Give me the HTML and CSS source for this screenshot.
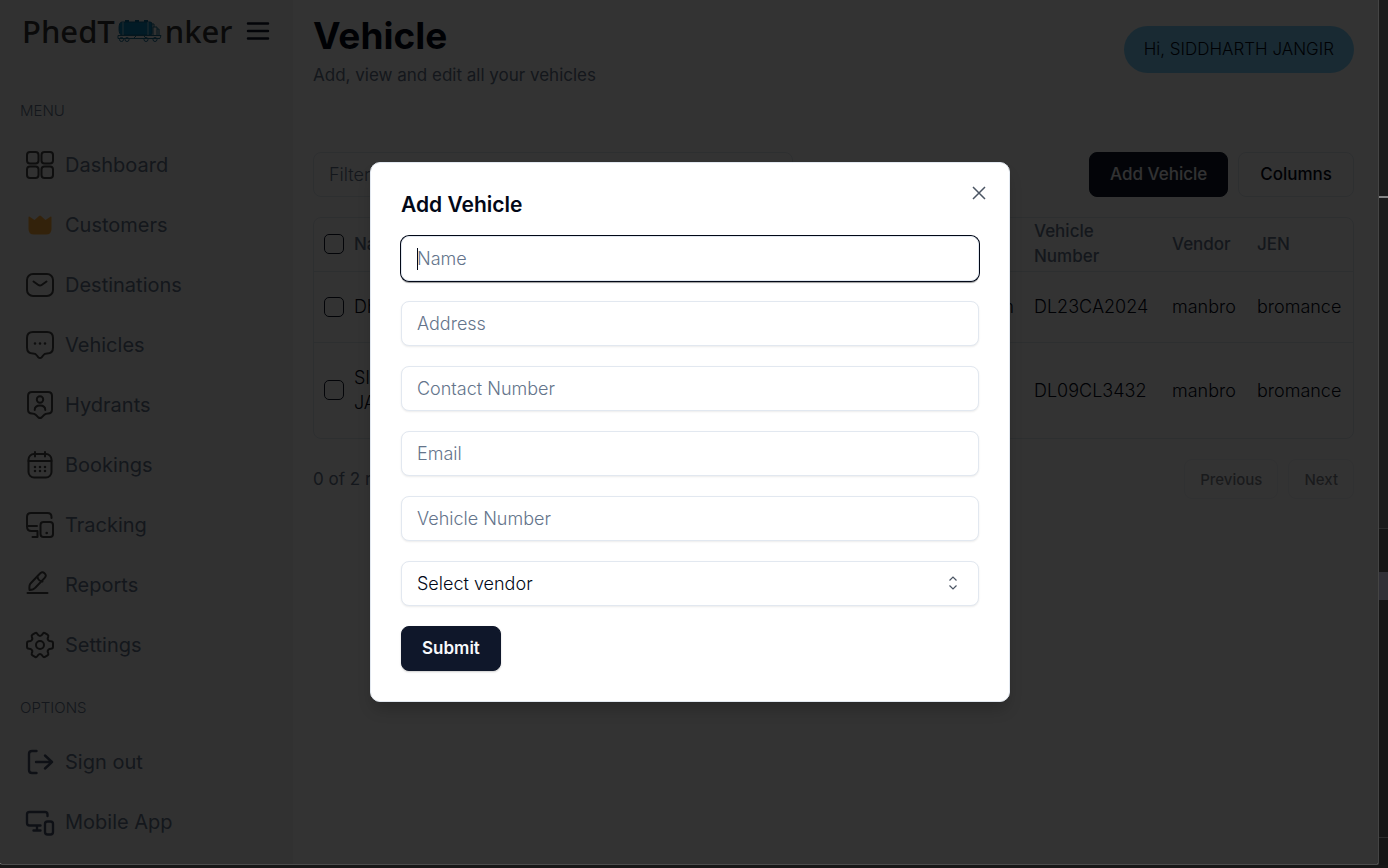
FILE: index.html
```html
<!DOCTYPE html>
<html lang="en">
<head>
<meta charset="utf-8">
<meta name="viewport" content="width=device-width, initial-scale=1">
<title>Vehicle</title>
<link rel="stylesheet" href="styles.css">
</head>
<body>
<div class="desktop">
  <div class="window">
    <div class="app">
      <aside class="sidebar">
        <div class="brand">
          <a class="logo" href="#" aria-label="PhedTanker">
            <span>PhedT</span>
            <svg class="tanker" viewBox="0 0 46 24" fill="none" stroke="#1d6f93" stroke-width="1">
              <path d="M5 3h28q2 0 2 2v9q0 2-2 2H5q-3 0-3-6.500T5 3z" fill="#0d86bd" stroke="#0b6c98"/>
              <path d="M6 3v13M31 3v13" stroke="#a9d5e6"/>
              <path d="M8 2h4M18 2h4M27 2h4" stroke="#0b6c98" stroke-width="2"/>
              <path d="M36 16V8h4v8M40 10h2v6M34 5h3v3M1 16.500h43l-1 3H1zM16 20l3-3M30 20l-3-3"/>
              <circle cx="4.500" cy="20.500" r="2"/><circle cx="10" cy="20.500" r="2"/>
              <circle cx="29" cy="20.500" r="2"/><circle cx="38" cy="20.500" r="2"/>
            </svg>
            <span>nker</span>
          </a>
          <button class="burger" aria-label="Toggle menu">
            <svg viewBox="0 0 30 30" fill="none" stroke="currentColor" stroke-width="2.500" stroke-linecap="round"><path d="M5 7.500h20M5 15h20M5 22.500h20"/></svg>
          </button>
        </div>
        <nav>
          <h2 class="group">MENU</h2>
          <ul class="menu">
            <li><a href="#"><svg class="ico" viewBox="0 0 30 30"><rect x="2" y="2" width="11.500" height="11.500" rx="3"/><rect x="16.500" y="2" width="11.500" height="11.500" rx="3"/><rect x="2" y="16.500" width="11.500" height="11.500" rx="3"/><rect x="16.500" y="16.500" width="11.500" height="11.500" rx="3"/></svg>Dashboard</a></li>
            <li><a href="#"><svg class="ico crown" viewBox="0 0 30 30"><path d="M3.500 7.500q0-1.500 1.200-.700L9.500 10l4.500-4q1-1 2 0l4.500 4 4.800-3.200q1.200-.800 1.200.700V19q0 5.500-5.500 5.500H9q-5.500 0-5.500-5.500z"/></svg>Customers</a></li>
            <li><a href="#"><svg class="ico" viewBox="0 0 30 30"><rect x="2" y="4" width="26" height="22" rx="6"/><path d="M8.500 11.500l4.500 3.300q2 1.400 4 0l4.500-3.300"/></svg>Destinations</a></li>
            <li><a href="#"><svg class="ico" viewBox="0 0 30 30"><path d="M8 2h14q6 0 6 6v9.500q0 6-6 6-2.500 0-3.500 1.500l-1.700 2.200q-1.800 1.600-3.600 0L11.500 25Q10.500 23.500 8 23.500q-6 0-6-6V8q0-6 6-6z"/><path class="dots" d="M10 13.500h.01M15 13.500h.01M20 13.500h.01"/></svg>Vehicles</a></li>
            <li><a href="#"><svg class="ico" viewBox="0 0 30 30"><path d="M7 2h16q4 0 4 4v13.500q0 4-4 4-2.500 0-3.700 1.300l-2.600 2.600q-1.700 1.300-3.400 0l-2.600-2.600Q9.500 23.500 7 23.500q-4 0-4-4V6q0-4 4-4z"/><circle cx="15" cy="9.500" r="3.200"/><path d="M9.700 20q0-4.500 5.300-4.500t5.300 4.500"/></svg>Hydrants</a></li>
            <li><a href="#"><svg class="ico" viewBox="0 0 30 30"><rect x="3.500" y="4" width="23" height="23.500" rx="5.500"/><path d="M3.500 11h23M10 2v4.500M20 2v4.500"/><path class="dots" d="M10 17h.01M15 17h.01M20 17h.01M10 21h.01M15 21h.01M20 21h.01"/></svg>Bookings</a></li>
            <li><a href="#"><svg class="ico" viewBox="0 0 30 30"><path d="M26.500 8V7q0-4-4-4H6Q2 3 2 7v9.500q0 4.500 4.500 4.500h6V27H7.500M2 16h10"/><rect x="15.500" y="12" width="12.500" height="15" rx="3"/><path class="dots" d="M21.700 23h.01"/></svg>Tracking</a></li>
            <li><a href="#"><svg class="ico" viewBox="0 0 30 30"><path d="M2.500 23h20M4.500 20q-.5-5 1-6.500L14.500 4q2.500-3 5-.800t.200 4.700L10.500 17.500Q8.500 20 4.500 20zM12.500 6.500q.5 4.500 5 5"/></svg>Reports</a></li>
            <li><a href="#"><svg class="ico" viewBox="0 0 30 30"><circle cx="15" cy="15" r="4"/><path d="M10 3.200q1.300-.8 2.200.500Q13.500 6 15 6t2.800-2.300q.9-1.300 2.200-.5l2.500 1.500q1.300.8.700 2.300-1.200 2 .2 3.300.9 1 2.600 1 2 0 2 1.900v3.600q0 1.900-2 1.900-1.700 0-2.600 1-1.400 1.300-.2 3.300.6 1.500-.7 2.300L20 26.800q-1.300.8-2.200-.5Q16.500 24 15 24t-2.800 2.300q-.9 1.300-2.200.5l-2.500-1.500q-1.300-.8-.7-2.300 1.200-2-.2-3.300-.9-1-2.600-1-2 0-2-1.900v-3.600q0-1.900 2-1.900 1.700 0 2.600-1 1.400-1.300.2-3.300-.6-1.500.7-2.300z"/></svg>Settings</a></li>
          </ul>
          <h2 class="group">OPTIONS</h2>
          <ul class="menu">
            <li><a href="#"><svg class="ico bold" viewBox="0 0 30 30"><path d="M11.500 4H7Q4 4 4 7v16q0 3 3 3h4.500M11 15h16M20 8.500l7 6.500-7 6.500"/></svg>Sign out</a></li>
            <li><a href="#"><svg class="ico bold" viewBox="0 0 30 30"><path d="M22.500 9V7.500q0-2.500-2.500-2.500H4.500Q2 5 2 7.500V16q0 2.500 2.500 2.500h11M8.500 23.500h7M12 18.500v5"/><rect x="20" y="14.500" width="8" height="13" rx="2.500"/></svg>Mobile App</a></li>
          </ul>
        </nav>
      </aside>

      <main class="main">
        <header class="page-head">
          <div>
            <h1>Vehicle</h1>
            <p>Add, view and edit all your vehicles</p>
          </div>
          <span class="pill">Hi, SIDDHARTH JANGIR</span>
        </header>
        <div class="toolbar">
          <input class="filter" type="text" placeholder="Filter names..." aria-label="Filter names">
          <button class="btn dark">Add Vehicle</button>
          <button class="btn light">Columns</button>
        </div>
        <div class="table-box">
          <table>
            <colgroup><col class="c-check"><col class="c-name"><col><col class="c-number"><col class="c-vendor"><col class="c-jen"></colgroup>
            <thead>
              <tr><th><input type="checkbox" aria-label="Select all"></th><th>Name</th><th>Email</th><th>Vehicle Number</th><th>Vendor</th><th>JEN</th></tr>
            </thead>
            <tbody>
              <tr><td><input type="checkbox" aria-label="Select row"></td><td>Dhruv</td><td class="email">dhruv@gmail.com</td><td>DL23CA2024</td><td>manbro</td><td>bromance</td></tr>
              <tr class="tall"><td><input type="checkbox" aria-label="Select row"></td><td>SIDDHARTH JANGIR</td><td></td><td>DL09CL3432</td><td>manbro</td><td>bromance</td></tr>
            </tbody>
          </table>
        </div>
        <footer class="pager">
          <p>0 of 2 row(s) selected.</p>
          <button class="btn small" disabled>Previous</button>
          <button class="btn small" disabled>Next</button>
        </footer>
      </main>
    </div>

    <div class="overlay">
      <form class="dialog" role="dialog" aria-modal="true" aria-labelledby="dialog-title">
        <h2 id="dialog-title">Add Vehicle</h2>
        <div class="field"><input class="focused" type="text" placeholder="Name" aria-label="Name"><span class="caret"></span></div>
        <div class="field"><input type="text" placeholder="Address" aria-label="Address"></div>
        <div class="field"><input type="text" placeholder="Contact Number" aria-label="Contact Number"></div>
        <div class="field"><input type="text" placeholder="Email" aria-label="Email"></div>
        <div class="field"><input type="text" placeholder="Vehicle Number" aria-label="Vehicle Number"></div>
        <div class="field">
          <select aria-label="Vendor"><option>Select vendor</option></select>
          <svg class="updown" viewBox="0 0 20 20" fill="none" stroke="currentColor" stroke-width="1.200"><path d="M6.500 7.500L10 4l3.500 3.500M6.500 12.500L10 16l3.500-3.500"/></svg>
        </div>
        <button class="btn dark submit" type="submit">Submit</button>
        <button class="close" type="button" aria-label="Close"><svg viewBox="0 0 20 20" fill="none" stroke="currentColor" stroke-width="1.500"><path d="M4 4l12 12M16 4L4 16"/></svg></button>
      </form>
    </div>
  </div>
  <div class="edge"><i class="edge-top"></i><i class="edge-mid"></i><i class="edge-gap"></i><i class="edge-thumb"></i><i class="edge-rest"></i><i class="edge-end"></i></div>
</div>
</body>
</html>
```
FILE: styles.css
```css
* { box-sizing: border-box; margin: 0; }

body {
  background: #171717;
  color: #020817;
  font-family: Inter, "Open Sans", sans-serif;
  font-size: 18px;
  font-weight: 300;
  line-height: 25px;
}

button, input, select { font: inherit; color: inherit; }
ul { list-style: none; padding: 0; }
svg { display: block; flex: none; }

.desktop { display: flex; height: 100vh; padding-bottom: 3px; }
.window {
  position: relative;
  flex: 1;
  overflow: hidden;
  border-right: 1px solid #444;
  border-bottom: 1px solid #4c4c4c;
  border-radius: 0 0 2px 2px;
}
.app { display: flex; min-height: 100%; background: #fff; }

/* sidebar */
.sidebar { flex: 0 0 293px; padding: 0 20px; background: #f5f5f5; }
.brand { display: flex; align-items: center; justify-content: space-between; height: 62px; margin-bottom: 16px; padding-left: 2px; }
.logo {
  display: flex;
  align-items: center;
  color: #333;
  font: 500 31px/42px "Noto Sans", sans-serif;
  text-decoration: none;
}
.tanker { width: 46px; height: 24px; margin: 0 2px; }
.burger { padding: 0; border: 0; background: none; color: #0f172a; }
.burger svg { width: 30px; height: 30px; }
.group { padding: 23px 0 14px; color: #64748b; font-size: 15px; font-weight: 300; line-height: 20px; }
.menu a { display: flex; align-items: center; gap: 10px; height: 60px; padding-left: 5px; color: #64748b; font-size: 20px; font-weight: 400; text-decoration: none; }
.ico { width: 30px; height: 30px; fill: none; stroke: #464646; stroke-width: 2; stroke-linecap: round; stroke-linejoin: round; }
.ico .dots { stroke-width: 2.6; }
.ico.bold { stroke: #46526a; stroke-width: 2.4; }
.ico.crown { fill: #ffab3a; stroke: none; }

/* page */
.main { flex: 1; min-width: 0; padding: 15px 24px 0 20px; }
.page-head { display: flex; justify-content: space-between; align-items: flex-start; margin-bottom: 64px; }
.page-head h1 { font-size: 37px; font-weight: 700; line-height: 42px; }
.page-head p { margin-top: 6px; color: #64748b; font-size: 17px; font-weight: 400; }
.pill { margin-top: 11px; padding: 11px 20px; border-radius: 24px; background: #7dd3fc; font-size: 17px; }
.toolbar { display: flex; gap: 10px; }
.filter { width: 480px; height: 45px; margin-right: auto; padding: 0 15px; border: 1px solid #e2e8f0; border-radius: 8px; background: none; }
::placeholder { color: #64748b; opacity: 1; }
.btn { height: 45px; padding: 0 20px; border: 1px solid #e2e8f0; border-radius: 8px; background: #fff; font-size: 17px; font-weight: 500; }
.btn.light { padding: 0 21px; }
.btn.dark { border-color: #0f172a; background: #0f172a; color: #f8fafc; }
.btn.small { height: 40px; padding: 0 15px; font-size: 15px; opacity: .5; color: #020817; }

.table-box { margin-top: 20px; border: 1px solid #e2e8f0; border-radius: 8px; }
table { width: 100%; table-layout: fixed; border-collapse: collapse; }
th, td { padding: 0 10px; text-align: left; vertical-align: middle; }
th { height: 53px; color: #64748b; font-size: 17px; font-weight: 500; }
td { height: 71px; border-top: 1px solid #e2e8f0; }
.tall td { height: 96px; }
.email { text-align: right; }
.c-check { width: 30px; }
.c-name { width: 130px; }
.c-number { width: 138px; }
.c-vendor { width: 85px; }
.c-jen { width: 106px; }
th:first-child, td:first-child { padding-right: 0; }
input[type="checkbox"] { display: block; appearance: none; width: 20px; height: 20px; border: 1px solid #0f172a; border-radius: 5px; }

.pager { display: flex; gap: 10px; align-items: center; padding-top: 20px; color: #64748b; }
.pager p { margin-right: auto; font-size: 17px; font-weight: 400; }

/* dialog */
.overlay { position: absolute; inset: 0; display: flex; align-items: center; justify-content: center; padding-left: 2px; background: rgba(0, 0, 0, .8); }
.dialog {
  position: relative;
  display: flex;
  flex-direction: column;
  gap: 20px;
  width: 640px;
  padding: 30px;
  border: 1px solid #e2e8f0;
  border-radius: 10px;
  background: #fff;
  box-shadow: 0 10px 15px -3px rgba(0, 0, 0, .2);
}
.dialog h2 { font-size: 21px; font-weight: 600; line-height: 23px; }
.field { position: relative; display: flex; height: 45px; }
.field input, .field select {
  width: 100%;
  padding: 0 15px;
  border: 1px solid #e2e8f0;
  border-radius: 8px;
  background: #fff;
  box-shadow: 0 1px 2px rgba(0, 0, 0, .08);
  appearance: none;
}
.field .focused { box-shadow: 0 0 0 1px #020817, 0 2px 1px rgba(0, 0, 0, .4); }
.caret { position: absolute; left: 16px; top: 12px; width: 1px; height: 22px; background: #020817; }
.updown { position: absolute; right: 16px; top: 12px; width: 20px; height: 20px; color: #4b5563; pointer-events: none; }
.submit { align-self: flex-start; box-shadow: 0 1px 2px rgba(0, 0, 0, .2); font-weight: 600; }
.close { position: absolute; top: 20px; right: 20px; padding: 0; border: 0; background: none; color: #4b5563; }
.close svg { width: 20px; height: 20px; }

/* neighbouring window visible past the right edge */
.edge { display: flex; flex-direction: column; flex: 0 0 9px; background: #151515; }
.edge-top { height: 198px; border-bottom: 2px solid #858585; background: #1b1b1b; }
.edge-mid { height: 331px; border-bottom: 1px solid #2b2b2b; background: #1b1b1b; }
.edge-gap { height: 43px; }
.edge-thumb { height: 28px; background: #303036; }
.edge-rest { flex: 1; border-bottom: 1px solid #2b2b2b; }
.edge-end { height: 27px; }
```
